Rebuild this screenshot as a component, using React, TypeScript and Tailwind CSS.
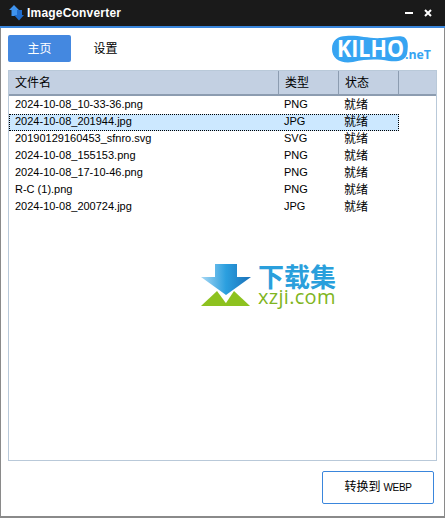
const rows = [
  { name: '2024-10-08_10-33-36.png', type: 'PNG' },
  { name: '2024-10-08_201944.jpg', type: 'JPG', selected: true },
  { name: '20190129160453_sfnro.svg', type: 'SVG' },
  { name: '2024-10-08_155153.png', type: 'PNG' },
  { name: '2024-10-08_17-10-46.png', type: 'PNG' },
  { name: 'R-C (1).png', type: 'PNG' },
  { name: '2024-10-08_200724.jpg', type: 'JPG' },
]

const font = "font-['Liberation_Sans','Noto_Sans_CJK_SC',sans-serif]"

const AppIcon = () => (
  <svg width="15" height="16" viewBox="0 0 15 16">
    <path d="M5 0 L10 5 H8 V11 H2.5 V5 H0 Z" fill="#3f93ee" />
    <path d="M8 5 H13 V10 H15 L10 15.5 L5 10 H8 Z" fill="#1f6ccc" />
  </svg>
)

const KilhoLogo = () => (
  <svg width="100" height="28" viewBox="0 0 100 28">
    <path
      d="M0 14 C0 5 6 1 14 1 C28 0 36 4 50 3 C60 2 68 0 72 2 C77 5 76 13 75 19 C73 26 65 27 57 26 C45 24 35 24 21 27 C9 29 0 24 0 14 Z"
      fill="#36a4f2"
    />
    <text
      x="5"
      y="22"
      fill="#ffffff"
      fontFamily="'Open Sans', sans-serif"
      fontWeight="700"
      fontSize="24"
      textLength="67"
      lengthAdjust="spacingAndGlyphs"
    >
      KILHO
    </text>
    <text
      x="73"
      y="24"
      fill="#36a4f2"
      fontFamily="'Open Sans', sans-serif"
      fontWeight="700"
      fontSize="13"
      textLength="26"
      lengthAdjust="spacingAndGlyphs"
    >
      .neT
    </text>
  </svg>
)

const Watermark = () => (
  <div className="absolute left-[200px] top-[263px] flex items-center gap-[6px] pointer-events-none">
    <svg width="52" height="44" viewBox="0 0 52 44">
      <defs>
        <linearGradient id="arrow" x1="0" x2="1" y1="0" y2="0">
          <stop offset="0" stopColor="#a8d8f4" />
          <stop offset="0.5" stopColor="#2b9fdf" />
          <stop offset="1" stopColor="#1a70b8" />
        </linearGradient>
      </defs>
      <path d="M15 1 H37 V14 H51 L26 32 L1 14 H15 Z" fill="url(#arrow)" />
      <path d="M17 28 L28 43 H1 Z" fill="#8dc21f" />
      <path d="M34 28 L50 43 H24 Z" fill="#8dc21f" />
    </svg>
    <div className="flex flex-col items-start">
      <span className="font-['Noto_Sans_CJK_SC',sans-serif] font-bold text-[26px] leading-[23px] text-[#2a9fdc]">
        下载集
      </span>
      <span className="font-['Open_Sans',sans-serif] text-[20px] leading-[20px] tracking-[0.3px] text-[#7fb522]">
        xzji.com
      </span>
    </div>
  </div>
)

export default function App() {
  return (
    <div className={`relative w-[445px] h-[518px] flex flex-col overflow-hidden bg-white text-black text-[11px] ${font}`}>
      {/* Title bar */}
      <div className="h-[26px] shrink-0 flex items-center pl-[9px] pr-[13px] bg-[#1a1a1a] text-white">
        <AppIcon />
        <span className="ml-[3px] font-bold text-[12px] tracking-[0.2px]">ImageConverter</span>
        <div className="ml-auto flex items-center gap-[11px]">
          <span className="w-[8px] h-[2px] bg-white" />
          <svg width="8" height="8" viewBox="0 0 8 8">
            <path d="M1 1 L7 7 M7 1 L1 7" stroke="#ffffff" strokeWidth="2" />
          </svg>
        </div>
      </div>
      <div className="h-[2px] shrink-0 bg-[#3a86dc]" />

      {/* Body */}
      <div className="flex-1 min-h-0 flex flex-col border-l border-r border-b-2 border-[#8a8a8a] pl-[7px] pr-[7px]">
        <div className="h-[42px] shrink-0 flex items-center pt-[6px] pb-[6px]">
          <div className="w-[63px] h-[27px] -mt-[1px] flex items-center justify-center rounded-[2px] bg-[#4488e0] text-white text-[12px]">
            主页
          </div>
          <div className="w-[63px] ml-[3px] text-center text-[12px]">设置</div>
          <div className="ml-auto mr-[5px] -mt-[1px]">
            <KilhoLogo />
          </div>
        </div>

        {/* File list */}
        <div className="flex-1 min-h-0 border border-[#b9c9d9] flex flex-col">
          <div className="h-[25px] shrink-0 flex bg-[#c3d0e2] border-b-2 border-[#8c9cb0] text-[12px]">
            <div className="w-[270px] pl-[6px] pt-[1px] flex items-center border-r border-[#8c9cb0]">文件名</div>
            <div className="w-[60px] pl-[6px] pt-[1px] flex items-center border-r border-[#8c9cb0]">类型</div>
            <div className="w-[60px] pl-[6px] pt-[1px] flex items-center border-r border-[#8c9cb0]">状态</div>
          </div>
          <div className="flex flex-col pt-[1px]">
            {rows.map((row) => (
              <div
                key={row.name}
                className={`h-[17px] w-[390px] flex items-center border border-dotted ${
                  row.selected ? 'bg-[#cce8ff] border-black' : 'border-transparent'
                }`}
              >
                <span className="w-[269px] pl-[5px] pb-[2px] leading-[13px] whitespace-nowrap">{row.name}</span>
                <span className="w-[60px] pl-[5px] pb-[2px] leading-[13px]">{row.type}</span>
                <span className="pl-[5px] pb-[1px] text-[12px] leading-[14px]">就绪</span>
              </div>
            ))}
          </div>
        </div>

        {/* Footer */}
        <div className="h-[55px] shrink-0 flex items-center justify-end pr-[3px] pt-[1px] pb-[4px]">
          <div className="w-[112px] h-[33px] flex items-center justify-center gap-[3px] rounded-[2px] border border-[#3a86dc] text-[12px]">
            <span>转换到</span>
            <span className="text-[10px] tracking-[-0.4px]">WEBP</span>
          </div>
        </div>
      </div>

      <Watermark />
    </div>
  )
}
